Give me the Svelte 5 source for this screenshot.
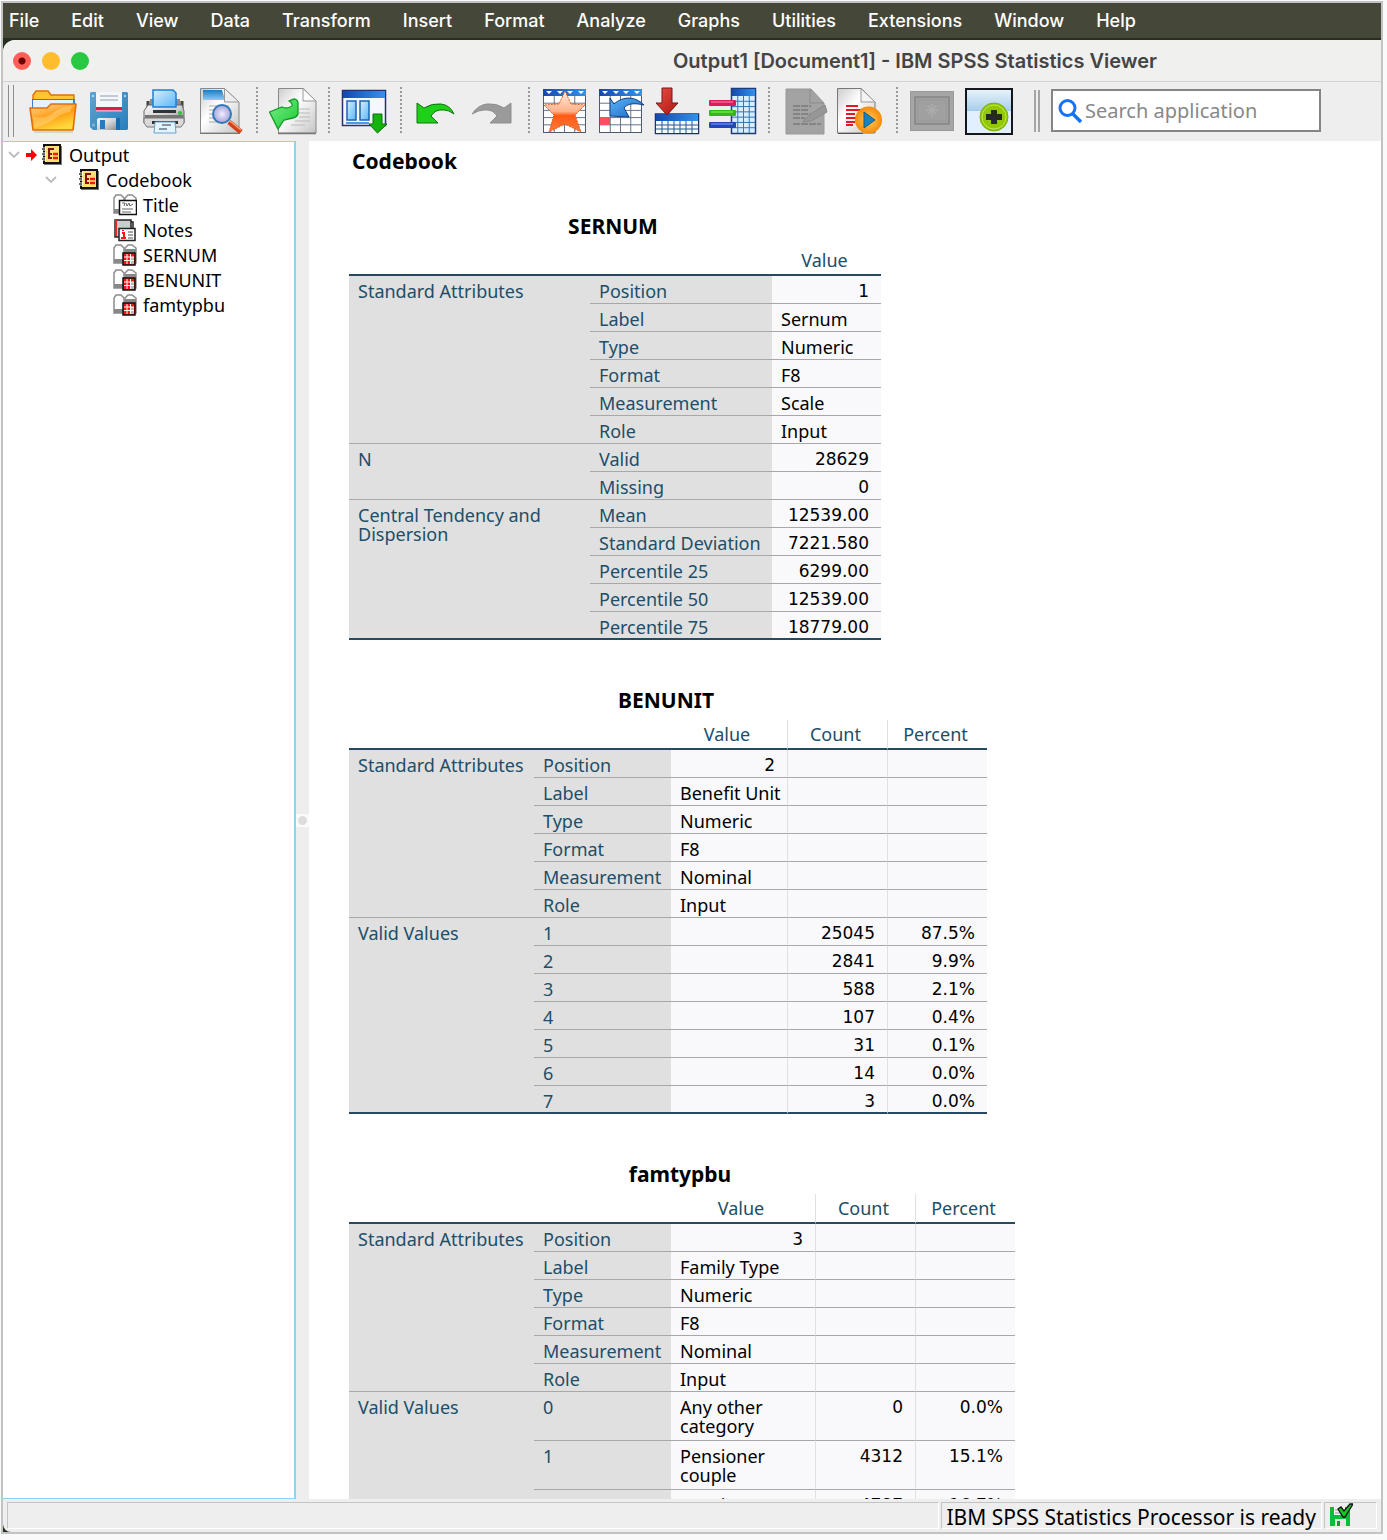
<script>
  const menus = ['File', 'Edit', 'View', 'Data', 'Transform', 'Insert', 'Format', 'Analyze', 'Graphs', 'Utilities', 'Extensions', 'Window', 'Help'];

  const toolGroups = [
    [['open', 'Open'], ['save', 'Save'], ['print', 'Print'], ['preview', 'Print preview']],
    [['export', 'Export']],
    [['recall', 'Recall dialogs']],
    [['undo', 'Undo'], ['redo', 'Redo']],
    [['star', 'Go to data'], ['goto', 'Go to case'], ['insert', 'Go to variable'], ['variables', 'Variables']],
    [['script', 'Designate window'], ['run', 'Run script']],
    [['image', 'Select last output'], ['add', 'Add']]
  ];

  const tree = [
    { label: 'Output', level: 0, icon: 'book' },
    { label: 'Codebook', level: 1, icon: 'book' },
    { label: 'Title', level: 2, icon: 'title' },
    { label: 'Notes', level: 2, icon: 'notes' },
    { label: 'SERNUM', level: 2, icon: 'table' },
    { label: 'BENUNIT', level: 2, icon: 'table' },
    { label: 'famtypbu', level: 2, icon: 'table' }
  ];

  const attributes = (position, label, measure) => ({
    name: 'Standard Attributes',
    rows: [
      ['Position', position], ['Label', label], ['Type', 'Numeric'],
      ['Format', 'F8'], ['Measurement', measure], ['Role', 'Input']
    ]
  });

  const tables = [
    {
      title: 'SERNUM', kind: 'narrow', headers: ['Value'],
      groups: [
        attributes('1', 'Sernum', 'Scale'),
        { name: 'N', rows: [['Valid', '28629'], ['Missing', '0']] },
        {
          name: 'Central Tendency and Dispersion',
          rows: [['Mean', '12539.00'], ['Standard Deviation', '7221.580'], ['Percentile 25', '6299.00'], ['Percentile 50', '12539.00'], ['Percentile 75', '18779.00']]
        }
      ]
    },
    {
      title: 'BENUNIT', kind: 'medium', headers: ['Value', 'Count', 'Percent'],
      groups: [
        attributes('2', 'Benefit Unit', 'Nominal'),
        {
          name: 'Valid Values',
          rows: [['1', '', '25045', '87.5%'], ['2', '', '2841', '9.9%'], ['3', '', '588', '2.1%'], ['4', '', '107', '0.4%'], ['5', '', '31', '0.1%'], ['6', '', '14', '0.0%'], ['7', '', '3', '0.0%']]
        }
      ]
    },
    {
      title: 'famtypbu', kind: 'wide', headers: ['Value', 'Count', 'Percent'],
      groups: [
        attributes('3', 'Family Type', 'Nominal'),
        {
          name: 'Valid Values', tall: true,
          rows: [['0', 'Any other category', '0', '0.0%'], ['1', 'Pensioner couple', '4312', '15.1%'], ['2', 'Pensioner single', '4787', '16.7%']]
        }
      ]
    }
  ];

  const isNumber = (text) => /^[\d.]+%?$/.test(text);
</script>

{#snippet grid(x, y, w, h, cols, rows, line)}
  {#each Array(cols - 1) as _, i}
    <path d={`M${x + (w * (i + 1)) / cols} ${y}v${h}`} stroke={line} />
  {/each}
  {#each Array(rows - 1) as _, i}
    <path d={`M${x} ${y + (h * (i + 1)) / rows}h${w}`} stroke={line} />
  {/each}
{/snippet}

{#snippet sheet()}
  <rect x="2.5" y="2.5" width="42" height="43" fill="#fff" stroke="#4c5a72" />
  {@render grid(3, 9, 41, 36, 4, 5, '#66748c')}
  <rect x="2" y="2" width="43" height="7" fill="url(#hdr)" />
  <path d="M5 4h6l-3 3zM16 4h6l-3 3zM26 4h6l-3 3zM37 4h6l-3 3z" fill="#fff" />
{/snippet}

{#snippet toolIcon(name)}
  <svg class="tool-icon" viewBox="0 0 48 48" aria-hidden="true" fill="none">
    {#if name === 'open'}
      <path d="M4 20V8l3-4h12l3 4h23v14H4z" fill="#ffc42e" stroke="#e07008" stroke-width="1.4" />
      <path d="M3 12h43v10H3z" fill="#2f7fe0" />
      <path d="M4 13h40v10H4z" fill="#e4f1ff" />
      <path d="M1 21h17l4-4h25l-3 26H4z" fill="url(#fold)" stroke="#e36c0a" stroke-width="1.6" stroke-linejoin="round" />
      <path d="M4 30q12 2 20-4t19-7l-2 6q-8 1-16 7T5 41z" fill="#fff0b0" opacity=".35" />
      <path d="M5 45h39" stroke="#999" opacity=".6" />
    {:else if name === 'save'}
      <path d="M6 5h36l1 1v36l-1 1H8l-3-3V6z" fill="url(#disk)" />
      <rect x="11" y="5" width="26" height="19" fill="#f4f6fa" />
      <path d="M15 9h18M15 13h18" stroke="#b3bccb" stroke-width="1.3" />
      <rect x="11" y="20" width="26" height="3.5" fill="#e01850" />
      <path d="M11 24h26" stroke="#f8b5c4" />
      <path d="M12 43V32l2-1h18v12z" fill="url(#metal)" />
      <rect x="15" y="33" width="5" height="9" fill="#2b79b8" />
      <path d="M31 31h4v12h-4z" fill="#1d6ca9" />
      <circle cx="8" cy="9" r="1" fill="#cfe6f8" /><circle cx="40" cy="9" r="1" fill="#cfe6f8" />
      <circle cx="8.500" cy="38" r="1.500" fill="#7fb9de" />
    {:else if name === 'print'}
      <path d="M9 12h30l1 12H8z" fill="#8c8c8c" />
      <path d="M7 14v7M41 14v7" stroke="#444" stroke-width="3" />
      <path d="M7 18h34l2 6v12H3V24z" fill="url(#metal)" stroke="#666" />
      <path d="M12 3h20l3 3v14H12z" fill="url(#sky)" stroke="#1b80d8" stroke-width="1.5" />
      <path d="M12 23h23v3H12z" fill="#333" />
      <path d="M4 28h38v3H4z" fill="#777" />
      <path d="M3 31h40v5l-3 4H6l-3-4z" fill="#d9d9d9" stroke="#777" />
      <path d="M11 34h26v3H11z" fill="#333" />
      <circle cx="39" cy="26" r="2" fill="#29c535" />
      <path d="M14 35h20l1 11H13z" fill="#e4f3fd" stroke="#67a3cf" />
      <path d="M21 38h9M18 42h8" stroke="#65788a" stroke-width="1.4" />
    {:else if name === 'preview'}
      <path d="M3.500 1.500h24L42 15v31H3.500z" fill="url(#page)" stroke="#888" />
      <path d="M6 3h19l3 10H6z" fill="url(#cap)" />
      <path d="M27.500 1.500V15H42z" fill="#eee" stroke="#999" />
      <path d="M12 19h20M12 23h20M12 27h20M12 31h20M12 35h18" stroke="#aaa" />
      <path d="m32 35 12 10" stroke="#d5401a" stroke-width="5" />
      <path d="m33 34 11 9" stroke="#f6a070" stroke-width="1.500" />
      <circle cx="25" cy="27" r="9" fill="url(#lens)" stroke="#3478b8" stroke-width="2" />
      <path d="M3 46.500h40" stroke="#777" />
    {:else if name === 'export'}
      <path d="M9.500 1.500h25L47 14v32H9.500z" fill="url(#page)" stroke="#888" />
      <path d="M34 1.500V14h13z" fill="#fafafa" stroke="#999" />
      <path d="M30 22h11M30 26h11M30 30h11M26 34h15M22 38h14" stroke="#bbb" />
      <path d="m.500 25 12.500-5q4 2 8 0q3-1 2-3t-3-3q4-2 6-2q3 1 3 4v11q-1 3-5 4l-9 2-6 9z" fill="url(#green)" stroke="#129a22" stroke-width="1.300" />
      <path d="M9 46.500h38" stroke="#777" stroke-width="1.500" />
    {:else if name === 'recall'}
      <rect x="1.500" y="3.500" width="43" height="35" fill="#f4f8fe" stroke="#28306e" stroke-width="1.500" />
      <rect x="2" y="4" width="42" height="7" fill="url(#hdr)" />
      <rect x="6" y="14" width="9" height="19" fill="url(#sky)" stroke="#1c63b4" stroke-width="1.500" />
      <rect x="19" y="14" width="9" height="19" fill="url(#sky)" stroke="#1c63b4" stroke-width="1.500" />
      <path d="M5 36h23" stroke="#1c79d4" stroke-width="1.500" />
      <path d="M32 27h9v10h5L36.500 46 28 37h4z" fill="#12b40c" stroke="#087008" />
    {:else if name === 'undo'}
      <path d="m4 16 7 5q8-5 17-4 9 1 13 10-5-4-10-4-9-1-13 6l7 7H4z" fill="#1fd018" stroke="#11720f" />
    {:else if name === 'redo'}
      <path d="m42 16-7 5q-8-5-17-4-9 1-15 10 7-4 12-4 9-1 13 6l-7 7h21z" fill="#9a9a9a" stroke="#8e8e8e" />
    {:else if name === 'star'}
      {@render sheet()}
      <path d="m24 4 6 13 14 1-10 10 6 17-16-8-16 8 5-17L3 18l15-1z" fill="url(#star)" stroke="#e05a1a" stroke-dasharray="2 1" />
    {:else if name === 'goto'}
      {@render sheet()}
      <rect x="3" y="31" width="10" height="7" fill="#ff4d63" />
      <path d="m13 11 4 6c9-8 21-8 30 1-9-2-16-2-20 3l5 9-19-1z" fill="url(#blue)" stroke="#123e80" />
    {:else if name === 'insert'}
      <rect x="2.500" y="27" width="43" height="19.500" fill="#fff" stroke="#20346c" stroke-width="1.500" />
      <path d="M3 34h42v12H3z" fill="#f4faff" />
      {@render grid(3, 34, 42, 12, 7, 3, '#245a9a')}
      <rect x="3" y="27" width="42" height="7" fill="url(#hdr)" />
      <path d="M9 1h10v15h6L14 28 3 16h6z" fill="url(#red)" stroke="#7c1414" />
    {:else if name === 'variables'}
      <rect x="22.500" y="1.500" width="24" height="45" fill="#d8eefc" stroke="#1d3c78" stroke-width="1.500" />
      {@render grid(23, 9, 23, 37, 4, 7, '#3278b4')}
      <rect x="23" y="2" width="23" height="7" fill="url(#hdr)" />
      <rect y="13" width="27" height="6" rx="1" fill="#dc1a5c" /><path d="M2 15h22" stroke="#ff86ac" />
      <rect y="23" width="27" height="6" rx="1" fill="#32b818" /><path d="M2 25h22" stroke="#96f266" />
      <rect y="35" width="27" height="6" rx="1" fill="#2447b8" /><path d="M2 37h22" stroke="#7ea4ff" />
    {:else if name === 'script'}
      <path d="M5 2h25l13 14v31H5z" fill="#a3a3a3" stroke="#999" />
      <path d="M29 2v14h14" stroke="#8b8b8b" />
      <path d="M12 19h18M12 23h15M12 27h17M12 31h12M12 37h28" stroke="#7b7b7b" stroke-dasharray="7 1" stroke-width="1.500" />
      <path d="m22 35 6-7 16-10 2 7-16 9z" fill="#979797" stroke="#888" />
    {:else if name === 'run'}
      <path d="M.500 1.500h24L38 15v31H.500z" fill="url(#page)" stroke="#777" />
      <path d="M24 1.500V15h14z" fill="#f4f4f4" stroke="#999" />
      <path d="M9 19h12M9 23h17M9 27h9M9 31h12M9 35h9M9 38h7" stroke="#e01b24" stroke-width="1.800" />
      <circle cx="31.500" cy="33" r="13.500" fill="url(#orange)" />
      <path d="m27 25 11 8-11 8z" fill="#1b83bd" stroke="#0c5a88" />
      <path d="M1 46.500h25" stroke="#555" />
    {:else if name === 'image'}
      <rect x="1.500" y="4.500" width="43" height="39" fill="#a6a6a6" stroke="#999" />
      <rect x="6" y="10" width="34" height="27" fill="#a0a0a0" stroke="#858585" stroke-width="1.500" />
      <rect x="9" y="13" width="28" height="21" stroke="#989898" />
      <path d="M23 17v13M17 23h12M19 19l8 8M27 19l-8 8" stroke="#acacac" stroke-width="1.500" />
    {:else if name === 'add'}
      <rect x="1" y="2" width="46" height="45" fill="#e2efff" />
      <path d="M1 2h46v22H1z" fill="url(#pane)" />
      <rect x="1" y="2" width="46" height="45" stroke="#14181c" stroke-width="2" />
      <circle cx="29" cy="30" r="14" fill="#92c802" stroke="#7dad0c" />
      <circle cx="29" cy="30" r="12" stroke="#bfe65a" />
      <path d="M26 23h6v4h5v6h-5v4h-6v-4h-5v-6h5z" fill="#262b22" />
    {/if}
  </svg>
{/snippet}

{#snippet treeIcon(name)}
  <svg class="tree-icon" viewBox="0 0 24 24" aria-hidden="true" fill="none">
    {#if name === 'book'}
      <path d="M4 3h17v19H3" fill="#777" />
      <rect x="3" y="2" width="16" height="18" fill="#ffe070" stroke="#111" stroke-width="2" />
      <path d="M1 6h4M1 11h4M1 16h4" stroke="#fff" stroke-width="3" />
      <path d="M1 6h3M1 11h3M1 16h3" stroke="#333" stroke-width="1.500" />
      <path d="M7 6h6M8 6v9M7 11h4M7 15h4" stroke="#8a1010" stroke-width="2" />
      <path d="M12 11h5M12 15h5" stroke="#f01818" stroke-width="2.500" />
    {:else if name === 'notes'}
      <path d="M2 2h16v17H2z" fill="#ccc" stroke="#222" stroke-width="1.500" />
      <path d="M3 2v16" stroke="#e22" stroke-width="2" />
      <path d="M18 4h2v7" stroke="#222" stroke-width="1.500" />
      <rect x="6" y="10.500" width="16" height="12" fill="#fff" stroke="#222" stroke-width="1.500" />
      <path d="M9 15h2v5M8 20h5M10 12v1" stroke="#f11" stroke-width="2" />
      <path d="M15 14h5M15 17h5M15 20h5" stroke="#888" stroke-width="1.400" />
    {:else}
      <path d="M1 20V5l2-3h5l3 3v15z" fill="#fff" stroke="#8c8c8c" stroke-width="1.500" />
      <path d="M12 20V5l3-3h4l4 3v15z" fill="#fff" stroke="#8c8c8c" stroke-width="1.500" />
      <path d="M1 16h9v4H1z" fill="#888" />
      {#if name === 'title'}
        <rect x="6.500" y="7.500" width="17" height="14" fill="#fff" stroke="#111" stroke-width="1.500" />
        <path d="M9 10h3l-1 3M13 10l1 3 2-3 1 3 3-2M9 16h11M9 19h9" stroke="#666" />
      {:else}
        <path d="M12 6h11v14H12z" fill="#888" />
        <rect x="10" y="10" width="12" height="12" fill="#f11" stroke="#111" stroke-width="1.500" />
        <path d="M18 14h3v7h-3z" fill="#bbb" />
        <path d="M14 11v10M17.500 11v10M11 14h10M11 17.500h10" stroke="#fff" />
      {/if}
    {/if}
  </svg>
{/snippet}

<svg class="defs" width="0" height="0" aria-hidden="true">
  <defs>
    <linearGradient id="fold" x2=".5" y2="1"><stop stop-color="#ffd9a0" /><stop offset=".55" stop-color="#ff9c14" /><stop offset="1" stop-color="#ffd83a" /></linearGradient>
    <linearGradient id="disk" x2="1" y2="1"><stop stop-color="#5aa6d6" /><stop offset="1" stop-color="#2a7dba" /></linearGradient>
    <linearGradient id="metal" x2="1" y2="1"><stop stop-color="#fafafa" /><stop offset=".5" stop-color="#d4d4d4" /><stop offset="1" stop-color="#8d8d8d" /></linearGradient>
    <linearGradient id="sky" x2="1" y2="1"><stop stop-color="#d6f0ff" /><stop offset="1" stop-color="#5db4f4" /></linearGradient>
    <linearGradient id="page" x2="1" y2="1"><stop stop-color="#ccc" /><stop offset=".4" stop-color="#fff" /><stop offset="1" stop-color="#c4c4c4" /></linearGradient>
    <linearGradient id="cap" x2="0" y2="1"><stop stop-color="#1b7cc4" /><stop offset="1" stop-color="#8dccf0" /></linearGradient>
    <radialGradient id="lens"><stop stop-color="#f0eeff" /><stop offset="1" stop-color="#a3a2dc" /></radialGradient>
    <linearGradient id="green" x2="1" y2="1"><stop stop-color="#7df08a" /><stop offset="1" stop-color="#16c832" /></linearGradient>
    <linearGradient id="hdr" x2="1" y2="0"><stop stop-color="#1548b0" /><stop offset="1" stop-color="#2f93ec" /></linearGradient>
    <linearGradient id="star" x2="0" y2="1"><stop stop-color="#fff0e4" /><stop offset=".5" stop-color="#ffb088" /><stop offset=".6" stop-color="#ff5a14" /><stop offset="1" stop-color="#ff7a3c" /></linearGradient>
    <linearGradient id="blue" x2="1" y2="1"><stop stop-color="#5cb4f4" /><stop offset="1" stop-color="#1564c8" /></linearGradient>
    <linearGradient id="red" x2="1" y2="1"><stop stop-color="#f05040" /><stop offset="1" stop-color="#a81414" /></linearGradient>
    <radialGradient id="orange"><stop stop-color="#ffcf60" /><stop offset="1" stop-color="#f58a0a" /></radialGradient>
    <linearGradient id="pane" x2="0" y2="1"><stop stop-color="#eaf4fc" /><stop offset="1" stop-color="#a6cdea" /></linearGradient>
  </defs>
</svg>

<div class="screen">
  <nav class="menubar" aria-label="Application menu">
    {#each menus as menu}
      <button type="button">{menu}</button>
    {/each}
  </nav>

  <div class="desktop">
    <div class="window">
      <header class="titlebar">
        <div class="lights">
          <button type="button" class="light close" aria-label="Close"></button>
          <button type="button" class="light minimise" aria-label="Minimise"></button>
          <button type="button" class="light zoom" aria-label="Zoom"></button>
        </div>
        <h1>Output1 [Document1] - IBM SPSS Statistics Viewer</h1>
      </header>

      <div class="toolbar" role="toolbar" aria-label="Viewer tools">
        <span class="grip"></span>
        {#each toolGroups as group, g}
          {#if g > 0}<span class="separator"></span>{/if}
          {#each group as [icon, label]}
            <button type="button" class="tool" aria-label={label}>{@render toolIcon(icon)}</button>
          {/each}
        {/each}
        <span class="grip second"></span>
        <label class="search">
          <svg viewBox="0 0 24 24" aria-hidden="true" fill="none" stroke="#1173ff" stroke-width="3">
            <circle cx="9.500" cy="9" r="7.500" /><path d="m15 15 8 8" stroke-width="3.500" />
          </svg>
          <input type="text" placeholder="Search application" aria-label="Search application" />
        </label>
      </div>

      <main class="body">
        <ul class="tree" aria-label="Outline">
          {#each tree as node}
            <li class="level{node.level}">
              {#if node.level < 2}
                <button type="button" class="twisty" aria-label="Collapse {node.label}">
                  <svg viewBox="0 0 12 8" aria-hidden="true"><path d="m1 1 5 5 5-5" fill="none" stroke="#bbb" stroke-width="1.800" /></svg>
                </button>
              {/if}
              {#if node.level === 0}
                <svg class="current" viewBox="0 0 11 12" aria-hidden="true"><path d="M0 4h5V0l6 6-6 6V8H0z" fill="#f00" /></svg>
              {/if}
              {@render treeIcon(node.icon)}
              <span>{node.label}</span>
            </li>
          {/each}
        </ul>

        <div class="splitter"><span></span></div>

        <section class="document">
          <h2>Codebook</h2>
          {#each tables as table}
            <table class={table.kind}>
              <caption>{table.title}</caption>
              <colgroup>
                <col class="group-col" /><col class="name-col" /><col class="value-col" />
                {#if table.headers.length > 1}<col class="stat-col" /><col class="stat-col" />{/if}
              </colgroup>
              <thead>
                <tr>
                  <td colspan="2"></td>
                  {#each table.headers as header}<th scope="col">{header}</th>{/each}
                </tr>
              </thead>
              {#each table.groups as group}
                <tbody class:tall={group.tall}>
                  {#each group.rows as row, r}
                    <tr>
                      {#if r === 0}<th scope="rowgroup" class="group" rowspan={group.rows.length}>{group.name}</th>{/if}
                      <th scope="row">{row[0]}</th>
                      {#each table.headers as _, c}
                        <td class:number={isNumber(row[c + 1] ?? '')}>{row[c + 1] ?? ''}</td>
                      {/each}
                    </tr>
                  {/each}
                </tbody>
              {/each}
            </table>
          {/each}
        </section>
      </main>

      <footer class="status">
        <div class="well grow"></div>
        <div class="well message">IBM SPSS Statistics Processor is ready</div>
        <div class="well saved">
          <svg viewBox="0 0 24 24" aria-label="Saved" role="img" fill="none">
            <path d="M1 4h18l2 2v17H1z" fill="#0dbb3a" />
            <path d="M5 4h11v8H5z" fill="#f2f2f2" /><path d="M6 7h6M6 10h5" stroke="#999" />
            <path d="M6 16h11v7H6z" fill="#e4e4e4" /><path d="M8 18h3v5H8z" fill="#0a9c30" />
            <path d="m9 6 3-2 3 4 6-7h3l-8 13h-2z" fill="#18c428" stroke="#111" stroke-width="1.300" />
          </svg>
        </div>
      </footer>
    </div>
  </div>
</div>

<style>
  :global(body) {
    background: #fafafa;
  }

  * {
    box-sizing: border-box;
  }

  button {
    padding: 0;
    border: 0;
    background: none;
    font: inherit;
    color: inherit;
  }

  .defs {
    position: absolute;
  }

  .screen {
    display: flex;
    flex-direction: column;
    height: calc(100vh - 7px);
    margin: 1px 4px 0 1px;
    border: 2px solid #c2c4c4;
    overflow: hidden;
    font-family: 'Noto Sans', 'Open Sans', sans-serif;
    font-size: 18px;
    color: #000;
  }

  .menubar {
    display: flex;
    flex: none;
    gap: 32px;
    height: 35px;
    padding-left: 6px;
    background: #454839;
    color: #fff;
    font-family: Inter, 'Liberation Sans', sans-serif;
    font-weight: 500;
    white-space: nowrap;
  }

  .desktop {
    display: flex;
    flex: 1;
    min-height: 0;
    padding-top: 2px;
    background: #25301f;
  }

  .window {
    display: flex;
    flex: 1;
    flex-direction: column;
    min-width: 0;
    border-radius: 12px 0 0 8px;
    background: #eee;
    overflow: hidden;
  }

  .titlebar {
    display: grid;
    flex: none;
    grid-template-columns: 446px 1fr;
    align-items: center;
    height: 42px;
    border-bottom: 1px solid #d0d2d2;
    background: #f0f0ee;
  }

  .lights {
    display: flex;
    gap: 11px;
    padding-left: 10px;
  }

  .light {
    width: 18px;
    height: 18px;
    border-radius: 50%;
  }

  .close {
    background: radial-gradient(circle, #6f0000 3px, #fe5f57 4px);
  }

  .minimise {
    background: #febc2e;
  }

  .zoom {
    background: #28c840;
  }

  h1 {
    margin: 0;
    color: #444;
    font: 600 20px/24px Inter, 'Liberation Sans', sans-serif;
    text-align: center;
    white-space: nowrap;
  }

  .toolbar {
    display: flex;
    flex: none;
    align-items: center;
    height: 59px;
    padding: 0 0 2px 5px;
  }

  .grip {
    width: 6px;
    height: 52px;
    margin-right: 11px;
    border: solid #8c8c8c;
    border-width: 0 1px;
  }

  .grip.second {
    height: 42px;
    margin: 0 11px 0 17px;
    border-width: 0 2px;
    border-color: #a4a4a4;
  }

  .tool {
    display: grid;
    flex: none;
    place-items: center;
    width: 56px;
    height: 56px;
  }

  .tool-icon {
    width: 48px;
    height: 48px;
  }

  .separator {
    flex: none;
    width: 16px;
    height: 48px;
    background: repeating-linear-gradient(#999 0 2px, transparent 2px 4px) 7px 0 / 2px 100% no-repeat;
  }

  .search {
    display: flex;
    align-items: center;
    gap: 3px;
    width: 270px;
    height: 43px;
    padding: 0 5px;
    border: 2px solid #858585;
    background: #fff;
  }

  .search svg {
    flex: none;
    width: 24px;
    height: 24px;
  }

  input {
    flex: 1;
    min-width: 0;
    padding: 0;
    border: 0;
    outline: 0;
    background: none;
    font: inherit;
    font-size: 20px;
  }

  input::placeholder {
    color: #888;
    opacity: 1;
  }

  .body {
    display: flex;
    flex: 1;
    min-height: 0;
  }

  .tree {
    flex: none;
    width: 293px;
    margin: 0;
    padding: 0;
    border: solid #8fd3ee;
    border-width: 1px 2px 1px 0;
    background: #fff;
    list-style: none;
  }

  .tree li {
    display: flex;
    align-items: center;
    height: 25px;
    padding-left: 5px;
  }

  .tree .level1 {
    padding-left: 42px;
  }

  .tree .level2 {
    padding-left: 110px;
  }

  .tree li > span {
    margin-left: 6px;
  }

  .tree .level0 > span,
  .tree .level1 > span {
    margin-left: 4px;
  }

  .twisty {
    display: grid;
    place-items: center;
    width: 12px;
    height: 24px;
    margin-right: 6px;
  }

  .level1 .twisty {
    margin-right: 21px;
  }

  .twisty svg {
    width: 12px;
    height: 8px;
  }

  .current {
    width: 11px;
    height: 12px;
    margin-right: 4px;
  }

  .tree-icon {
    flex: none;
    width: 24px;
    height: 24px;
  }

  .splitter {
    display: grid;
    flex: none;
    align-items: center;
    width: 13px;
  }

  .splitter span {
    height: 13px;
    background: radial-gradient(circle, #ddd 4px, #fafafa 5px);
  }

  .document {
    flex: 1;
    min-width: 0;
    padding: 0 40px;
    background: #fff;
    overflow: hidden;
  }

  h2,
  caption {
    color: #000;
    font-size: 21px;
    font-weight: 700;
    line-height: 28px;
  }

  h2 {
    margin: 6px 3px 37px;
  }

  table {
    margin-bottom: 46px;
    border-spacing: 0;
    table-layout: fixed;
    line-height: 19px;
  }

  caption {
    padding: 0 4px 6px 0;
  }

  .narrow {
    width: 532px;
  }

  .medium {
    width: 638px;
  }

  .wide {
    width: 666px;
  }

  .group-col {
    width: 185px;
  }

  .narrow .group-col {
    width: 241px;
  }

  .name-col {
    width: 137px;
  }

  .narrow .name-col {
    width: 182px;
  }

  .stat-col {
    width: 100px;
  }

  th,
  td {
    height: 28px;
    padding: 6px 9px 2px;
    border-bottom: 1px solid #a8a8a8;
    font-weight: 400;
    text-align: left;
    vertical-align: top;
  }

  td {
    padding-right: 4px;
  }

  .wide td {
    padding-right: 20px;
  }

  thead th,
  thead td {
    height: 30px;
    padding: 5px 4px 4px 0;
    border-bottom: 2px solid #264a60;
    text-align: center;
  }

  th {
    color: #204e68;
  }

  thead th + th,
  tbody td + td {
    border-left: 1px solid #e0e0e0;
  }

  tbody th {
    background: #e0e0e0;
    white-space: nowrap;
  }

  tbody .group {
    white-space: normal;
  }

  tbody td {
    background: #f9f9fb;
  }

  tbody .number {
    padding-right: 12px;
    font-family: 'DejaVu Sans', 'Noto Sans', sans-serif;
    font-size: 17px;
    text-align: right;
  }

  .tall th,
  .tall td {
    height: 49px;
  }

  tbody:last-child tr:last-child > *,
  tbody:last-child .group {
    padding-bottom: 1px;
    border-bottom: 2px solid #264a60;
  }

  .status {
    display: flex;
    flex: none;
    gap: 2px;
    height: 33px;
    padding: 3px 4px 3px;
    font-size: 21px;
    line-height: 28px;
  }

  .well {
    border: 1px solid;
    border-color: #c4c4c4 #fff #fff #c4c4c4;
  }

  .grow {
    flex: 1;
  }

  .message {
    padding: 0 5px 0 4px;
    white-space: nowrap;
  }

  .saved {
    width: 53px;
    padding-left: 4px;
  }

  .saved svg {
    display: block;
    width: 24px;
    height: 24px;
  }
</style>
